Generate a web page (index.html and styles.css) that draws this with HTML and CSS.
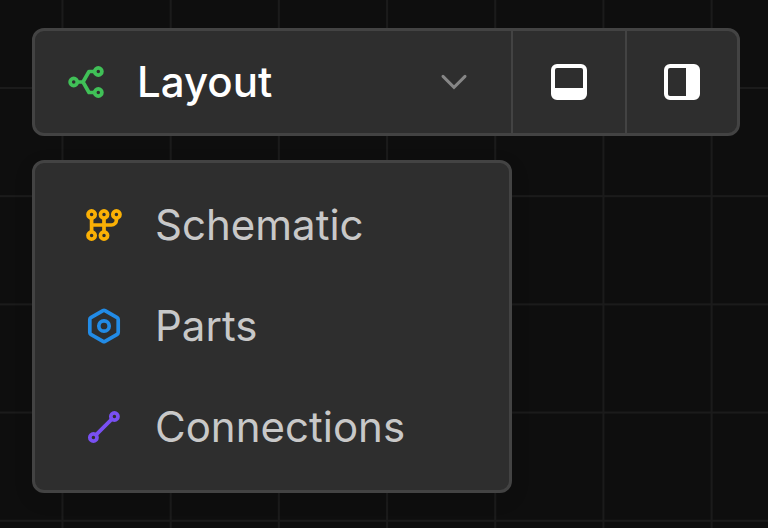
FILE: index.html
```html
<!DOCTYPE html>
<html lang="en">
<head>
<meta charset="utf-8">
<title>Layout</title>
<link rel="stylesheet" href="styles.css">
</head>
<body>
<div class="toolbar">
  <div class="select">
    <svg class="icon green" viewBox="0 0 48 48"><circle cx="17.7" cy="24" r="3.6"/><circle cx="42.3" cy="13.5" r="3.6"/><circle cx="42.3" cy="34.5" r="3.6"/><path d="M21.3 24H27M38.7 13.5H33L27 24L33 34.5H38.7"/></svg>
    <span class="title">Layout</span>
    <svg class="chevron" viewBox="0 0 30 20"><path d="M4 4.4L15 15.4L26 4.4"/></svg>
  </div>
  <div class="toggle">
    <svg class="panel" viewBox="0 0 36 36"><path fill-rule="evenodd" d="M6 0H30A6 6 0 0 1 36 6V30A6 6 0 0 1 30 36H6A6 6 0 0 1 0 30V6A6 6 0 0 1 6 0ZM6 4A2 2 0 0 0 4 6V24H32V6A2 2 0 0 0 30 4Z"/></svg>
  </div>
  <div class="toggle last">
    <svg class="panel" viewBox="0 0 36 36"><path fill-rule="evenodd" d="M6 0H30A6 6 0 0 1 36 6V30A6 6 0 0 1 30 36H6A6 6 0 0 1 0 30V6A6 6 0 0 1 6 0ZM6 4A2 2 0 0 0 4 6V30A2 2 0 0 0 6 32H22V4Z"/></svg>
  </div>
</div>
<div class="menu">
  <div class="item">
    <svg class="icon orange" viewBox="0 0 48 48"><circle cx="11.6" cy="13.5" r="3.6"/><circle cx="24" cy="13.5" r="3.6"/><circle cx="36.4" cy="13.5" r="3.6"/><circle cx="11.6" cy="34.5" r="3.6"/><circle cx="24" cy="34.5" r="3.6"/><path d="M11.6 17V31M24 17V31M11.6 24H31.4A5 5 0 0 0 36.4 19V17"/></svg>
    <span>Schematic</span>
  </div>
  <div class="item">
    <svg class="icon blue" viewBox="0 0 48 48"><path d="M23 8.7Q24 8.1 25 8.7L37.2 15.7Q38.2 16.3 38.2 17.4V30.6Q38.2 31.7 37.2 32.3L25 39.3Q24 39.9 23 39.3L10.8 32.3Q9.8 31.7 9.8 30.6V17.4Q9.8 16.3 10.8 15.7Z"/><circle cx="24" cy="24" r="5.2"/></svg>
    <span>Parts</span>
  </div>
  <div class="item">
    <svg class="icon purple" viewBox="0 0 48 48"><circle cx="34.4" cy="13.5" r="3.6"/><circle cx="13.4" cy="34.5" r="3.6"/><path d="M31.8 16.1L16 31.9"/></svg>
    <span>Connections</span>
  </div>
</div>
</body>
</html>
```
FILE: styles.css
```css
* { box-sizing: border-box; }
body {
  margin: 0;
  height: 528px;
  padding: 28px 28px 0 32px;
  overflow: hidden;
  font: 400 42px/48px Inter, sans-serif;
  background-color: #0e0e0e;
  background-image:
    linear-gradient(90deg, #1b1b1b 2px, transparent 2px),
    linear-gradient(#1b1b1b 1.5px, transparent 1.5px);
  background-size: 108.2px 108.2px;
  background-position: 61.5px 87px;
}
.toolbar {
  display: flex;
  height: 108px;
  border: 3px solid #434343;
  border-radius: 12px;
  background: #2e2e2e;
}
.select {
  display: flex;
  align-items: center;
  width: 476px;
  padding: 0 42px 0 21px;
}
.title {
  margin-left: 33px;
  color: #fff;
  font-weight: 500;
}
svg {
  display: block;
  flex: none;
}
.icon {
  width: 48px;
  height: 48px;
  fill: none;
  stroke: currentColor;
  stroke-width: 3.7;
  stroke-linejoin: round;
}
.chevron {
  width: 30px;
  height: 20px;
  margin-left: auto;
  fill: none;
  stroke: #868686;
  stroke-width: 3;
  stroke-linecap: round;
}
.toggle {
  display: flex;
  align-items: center;
  justify-content: center;
  width: 114px;
  border-left: 2px solid #434343;
}
.last { width: 112px; }
.panel {
  width: 36px;
  height: 36px;
  fill: #fff;
}
.menu {
  width: 480px;
  height: 333px;
  margin-top: 24px;
  padding: 11px 45px;
  border: 3px solid #434343;
  border-radius: 12px;
  background: #2e2e2e;
  box-shadow: 0 6px 20px rgba(0, 0, 0, .1);
}
.item {
  display: flex;
  align-items: center;
  gap: 27px;
  height: 101px;
  color: #c8c8c8;
}
.green { color: #40c057; }
.orange { color: #fab005; }
.blue { color: #228be6; }
.purple { color: #7950f2; }
```
